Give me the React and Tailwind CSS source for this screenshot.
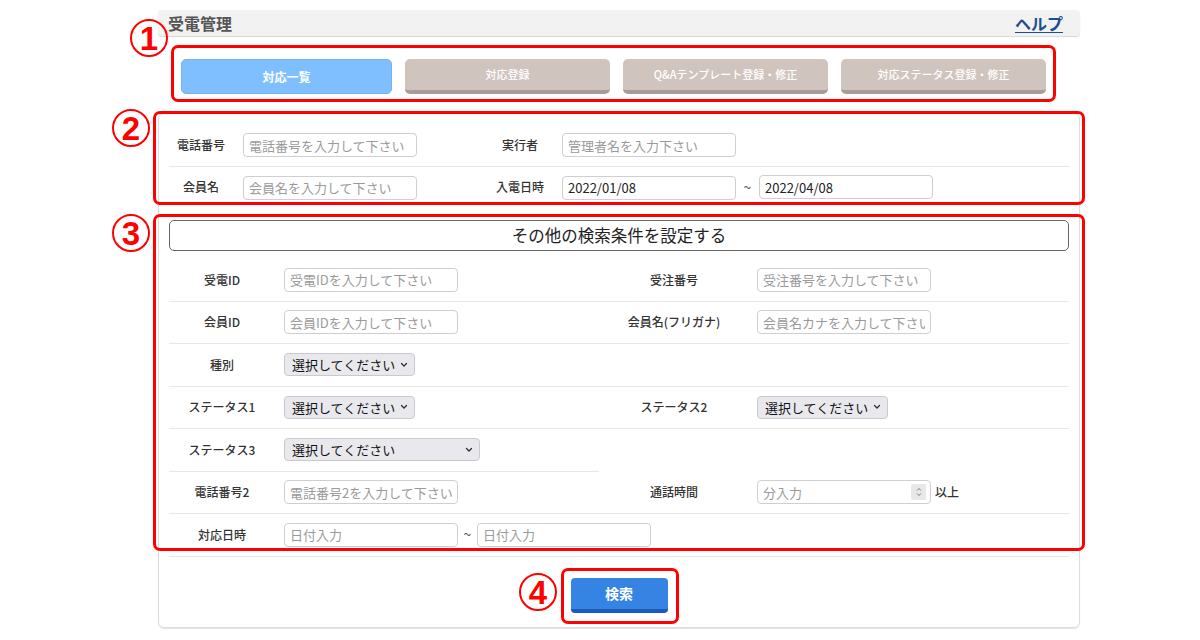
import React from "react";

const Field = ({ placeholder, value, w = "w-[174px]" }) => (
  <input
    readOnly
    placeholder={placeholder}
    defaultValue={value}
    className={`${w} h-[24px] rounded-[4px] border border-[#cfcfcf] bg-white px-[5px] text-[13px] text-[#222] placeholder:text-[#9a9a9a] outline-none`}
  />
);

const Select = ({ w = "w-[131px]" }) => (
  <div
    className={`${w} h-[23px] flex items-center justify-between rounded-[4px] border border-[#c9c9cf] bg-[#e9e9ed] pl-[7px] pr-[6px] text-[13px] text-[#111]`}
  >
    <span>選択してください</span>
    <svg width="8" height="6" viewBox="0 0 8 6" fill="none">
      <path d="M1.5 1.5 L4 4 L6.5 1.5" stroke="#333" strokeWidth="1.3" strokeLinecap="round" />
    </svg>
  </div>
);

const Label = ({ w, children }) => (
  <div className={`${w} shrink-0 text-center text-[12px] font-medium text-[#333]`}>{children}</div>
);

const Cell = ({ label, labelW, gap, children, border = true, className = "" }) => (
  <div className={`flex items-center h-full ${border ? "border-b border-[#e8e8e8]" : ""} ${className}`}>
    <Label w={labelW}>{label}</Label>
    <div className={`flex items-center ${gap}`}>{children}</div>
  </div>
);

const Row = ({ left, right, rightBorder = true }) => (
  <div className="flex h-[42.5px]">
    <Cell label={left.label} labelW="w-[106px]" gap="ml-[9px]" className="w-[430px]">
      {left.content}
    </Cell>
    <Cell label={right?.label} labelW="w-[150px]" gap="ml-[8px]" border={rightBorder} className="flex-1">
      {right?.content}
    </Cell>
  </div>
);

const Tab = ({ children, active, w }) =>
  active ? (
    <div className={`${w} h-[35px] flex items-center justify-center rounded-[5px] border border-[#74b3f2] bg-[#80bfff] text-[12px] font-bold text-white`}>
      {children}
    </div>
  ) : (
    <div className={`${w} h-[35px] flex items-center justify-center rounded-[5px] bg-[#d0c4be] border-b-[4px] border-[#a99c96] text-[11px] font-medium text-white`}>
      {children}
    </div>
  );

const Circle = ({ n, className }) => (
  <div
    className={`absolute w-[38px] h-[38px] rounded-full border-[2px] border-[#ff0000] flex items-center justify-center text-[33px] leading-none font-bold text-[#ff0000] font-['Liberation_Sans',sans-serif] ${className}`}
  >
    {n}
  </div>
);

export default function App() {
  return (
    <div className="relative w-[1200px] h-[640px] bg-white overflow-hidden font-['Noto_Sans_CJK_JP',sans-serif]">
      <div className="ml-[158px] w-[922px] pt-[10px]">
        {/* header */}
        <div className="h-[26px] flex items-center justify-between rounded-[4px] bg-[#f2f2f2] shadow-[0_1px_1px_#d6d6d6] pl-[10px] pr-[17px]">
          <span className="text-[16px] font-bold text-[#555]">受電管理</span>
          <span className="text-[16px] font-bold text-[#1f4e8c] underline underline-offset-2">ヘルプ</span>
        </div>

        {/* tabs */}
        <div className="mt-[23px] ml-[23px] flex gap-[13px]">
          <Tab active w="w-[211px]">対応一覧</Tab>
          <Tab w="w-[205px]">対応登録</Tab>
          <Tab w="w-[205px]">Q&amp;Aテンプレート登録・修正</Tab>
          <Tab w="w-[205px]">対応ステータス登録・修正</Tab>
        </div>

        {/* panel */}
        <div className="mt-[19px] h-[515px] rounded-[6px] border border-[#dcdcdc] shadow-[0_1px_1px_#e2e2e2] px-[10px] pt-[9px]">
          <div className="flex items-center h-[44px] border-b border-[#e8e8e8]">
            <Label w="w-[64px]">電話番号</Label>
            <div className="ml-[10px]"><Field placeholder="電話番号を入力して下さい" /></div>
            <div className="ml-[64px]"><Label w="w-[78px]">実行者</Label></div>
            <div className="ml-[3px]"><Field placeholder="管理者名を入力下さい" /></div>
          </div>
          <div className="flex items-center h-[40px]">
            <Label w="w-[64px]">会員名</Label>
            <div className="ml-[10px]"><Field placeholder="会員名を入力して下さい" /></div>
            <div className="ml-[64px]"><Label w="w-[78px]">入電日時</Label></div>
            <div className="ml-[3px]"><Field value="2022/01/08" /></div>
            <span className="w-[23px] text-center text-[14px] text-[#555]">~</span>
            <Field value="2022/04/08" />
          </div>

          {/* other conditions */}
          <div className="mt-[13px] h-[31px] flex items-center justify-center rounded-[5px] border border-[#666] text-[16.5px] text-[#222]">
            その他の検索条件を設定する
          </div>
          <div className="mt-[8px]">
            <Row
              left={{ label: "受電ID", content: <Field placeholder="受電IDを入力して下さい" /> }}
              right={{ label: "受注番号", content: <Field placeholder="受注番号を入力して下さい" /> }}
            />
            <Row
              left={{ label: "会員ID", content: <Field placeholder="会員IDを入力して下さい" /> }}
              right={{ label: "会員名(フリガナ)", content: <Field placeholder="会員名カナを入力して下さい" /> }}
            />
            <Row left={{ label: "種別", content: <Select /> }} />
            <Row
              left={{ label: "ステータス1", content: <Select /> }}
              right={{ label: "ステータス2", content: <Select /> }}
            />
            <Row left={{ label: "ステータス3", content: <Select w="w-[196px]" /> }} rightBorder={false} />
            <Row
              left={{ label: "電話番号2", content: <Field placeholder="電話番号2を入力して下さい" /> }}
              right={{
                label: "通話時間",
                content: (
                  <>
                    <div className="w-[174px] h-[24px] flex items-center justify-between rounded-[4px] border border-[#cfcfcf] pl-[5px] pr-[4px]">
                      <span className="text-[13px] text-[#9a9a9a]">分入力</span>
                      <div className="w-[15px] h-[16px] rounded-[2px] bg-[#e8e8e8] flex items-center justify-center">
                        <svg width="8" height="12" viewBox="0 0 8 12" fill="none">
                          <path d="M2 4.5 L4 2.5 L6 4.5 M2 7.5 L4 9.5 L6 7.5" stroke="#777" strokeWidth="1" />
                        </svg>
                      </div>
                    </div>
                    <span className="ml-[4px] text-[12px] font-medium text-[#333]">以上</span>
                  </>
                ),
              }}
            />
            <Row
              left={{
                label: "対応日時",
                content: (
                  <>
                    <Field placeholder="日付入力" />
                    <span className="w-[19px] text-center text-[14px] text-[#555]">~</span>
                    <Field placeholder="日付入力" />
                  </>
                ),
              }}
            />
          </div>

          <div className="mt-[21px] flex justify-center">
            <div className="w-[97px] h-[35px] flex items-center justify-center rounded-[4px] bg-[#3584e4] border-b-[4px] border-[#1b5bc0] text-[14px] font-bold text-white">
              検索
            </div>
          </div>
        </div>
      </div>

      {/* annotations */}
      <div className="absolute left-[171px] top-[45px] w-[885px] h-[57px] rounded-[7px] border-[3px] border-[#ff0000]" />
      <div className="absolute left-[153px] top-[111px] w-[932px] h-[94px] rounded-[7px] border-[3px] border-[#ff0000]" />
      <div className="absolute left-[153px] top-[214px] w-[932px] h-[337px] rounded-[7px] border-[3px] border-[#ff0000]" />
      <div className="absolute left-[561px] top-[568px] w-[118px] h-[56px] rounded-[7px] border-[3px] border-[#ff0000]" />
      <Circle n="1" className="left-[130px] top-[19px]" />
      <Circle n="2" className="left-[112px] top-[109px]" />
      <Circle n="3" className="left-[112px] top-[214px]" />
      <Circle n="4" className="left-[519px] top-[573px]" />
    </div>
  );
}
